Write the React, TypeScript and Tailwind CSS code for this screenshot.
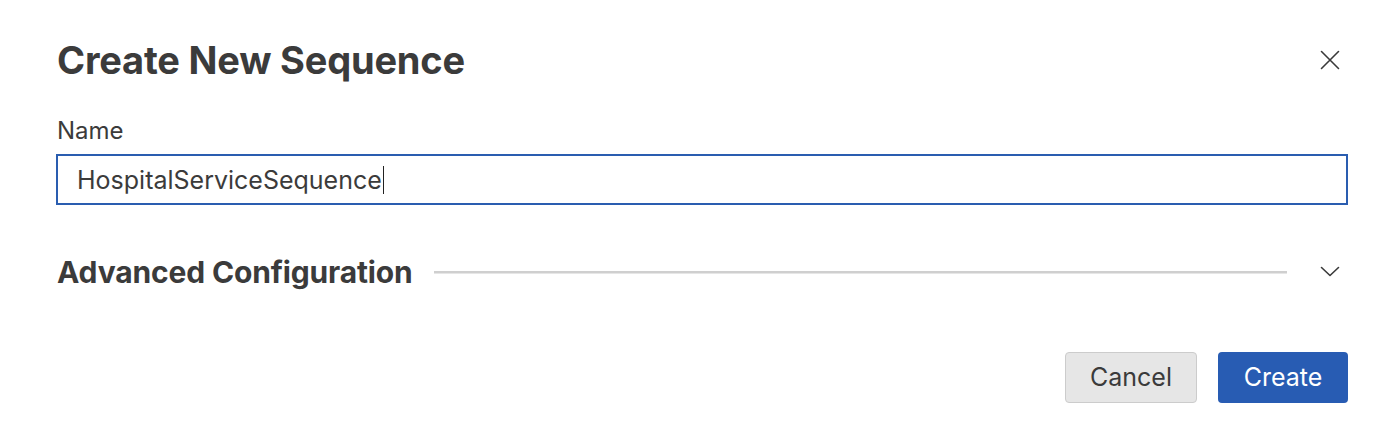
import React from 'react';

function CloseIcon() {
    return (
        <svg width="20" height="20" viewBox="0 0 20 20" fill="none" stroke="#3a3a3a" strokeWidth="1.6" strokeLinecap="round">
            <path d="M1.5 1.5 L18.5 18.5 M18.5 1.5 L1.5 18.5" />
        </svg>
    );
}

function ChevronIcon() {
    return (
        <svg width="20" height="12" viewBox="0 0 20 12" fill="none" stroke="#3a3a3a" strokeWidth="1.6" strokeLinecap="round" strokeLinejoin="round">
            <path d="M1.5 1.5 L10 9.5 L18.5 1.5" />
        </svg>
    );
}

export default function App() {
    return (
        <div className="w-[1388px] h-[446px] bg-white text-[#3b3b3b] font-['Inter',sans-serif] pl-[56px] pr-[40px]">
            {/* Header */}
            <div className="flex items-center justify-between pt-[30px] h-[90px] pr-[8px]">
                <h1 className="text-[38px] font-bold tracking-[-0.2px] leading-[48px] pl-px">Create New Sequence</h1>
                <button className="w-[20px] h-[20px] flex items-center justify-center">
                    <CloseIcon />
                </button>
            </div>

            {/* Name field */}
            <div className="mt-[26px]">
                <label className="block text-[24px] leading-[30px] pl-px">Name</label>
                <div className="mt-[8px] h-[51px] border-2 border-[#2a5db0] flex items-center pl-[19px]">
                    <span className="text-[25px] leading-[30px] text-[#3b3b3b]">HospitalServiceSequence</span>
                    <span className="w-px h-[28px] bg-[#222] ml-[1px]"></span>
                </div>
            </div>

            {/* Advanced Configuration */}
            <div className="flex items-center mt-[47px] h-[40px] pr-[8px]">
                <h2 className="text-[30px] font-bold tracking-[-0.15px] leading-[36px] pl-px shrink-0">Advanced Configuration</h2>
                <div className="flex-1 ml-[21px] mr-[33px] h-[3px] bg-[#cfcfcf] border-b border-[#e6e6e6]"></div>
                <button className="w-[20px] h-[20px] flex items-center justify-center">
                    <ChevronIcon />
                </button>
            </div>

            {/* Footer buttons */}
            <div className="flex justify-end gap-[21px] mt-[60px]">
                <button className="w-[132px] h-[51px] rounded-[4px] bg-[#e6e6e6] border border-[#cccccc] text-[25px] text-[#3b3b3b]">
                    Cancel
                </button>
                <button className="w-[130px] h-[51px] rounded-[4px] bg-[#285cb3] text-[25px] text-white">
                    Create
                </button>
            </div>
        </div>
    );
}
